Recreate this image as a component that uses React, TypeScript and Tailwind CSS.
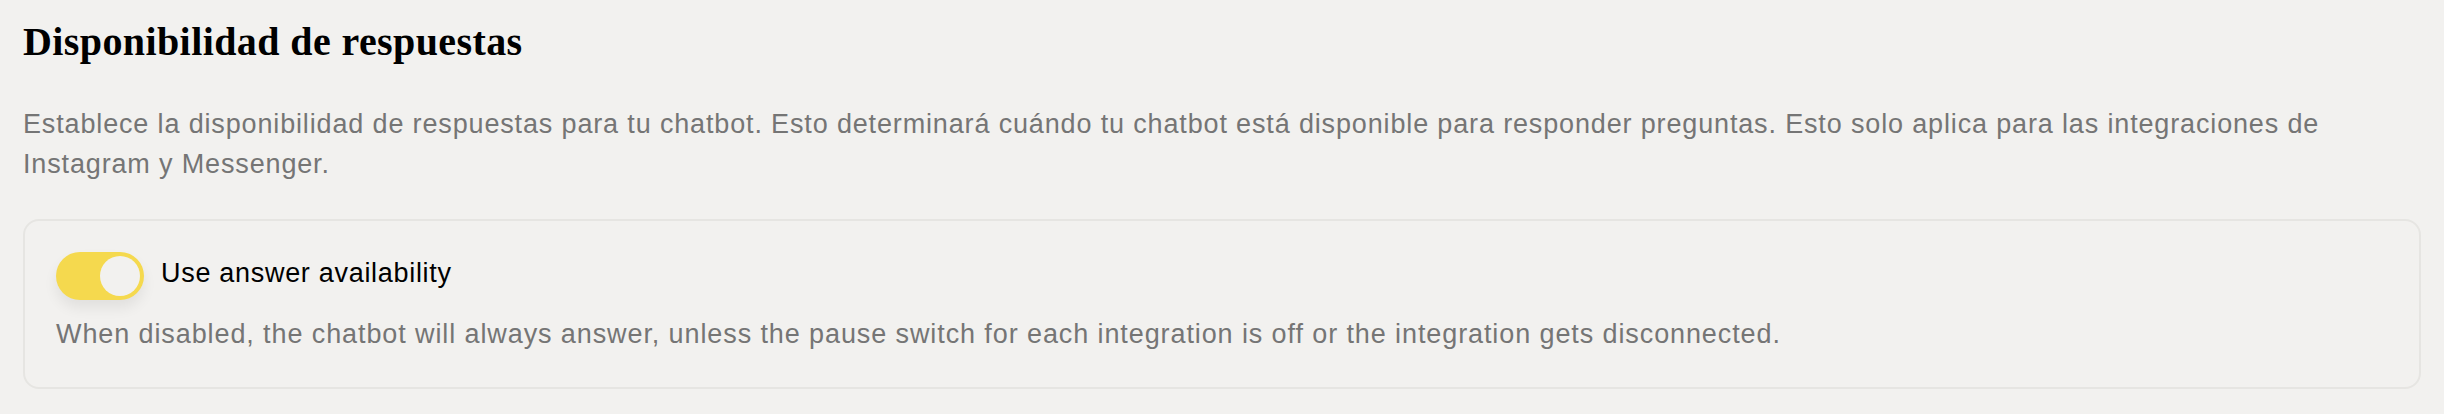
export default function App() {
  return (
    <div className="w-full h-[414px] bg-[#f2f1ef] px-[23px] pt-[22px]">
      <h2
        className="text-[40px] leading-[40px] font-bold tracking-[0.4px] text-black"
        style={{ fontFamily: '"Liberation Serif", serif' }}
      >
        Disponibilidad de respuestas
      </h2>
      <p
        className="mt-[42px] text-[27px] leading-[40px] tracking-[0.85px] text-[#757575]"
        style={{ fontFamily: '"Liberation Sans", Arial, sans-serif' }}
      >
        Establece la disponibilidad de respuestas para tu chatbot. Esto determinará cuándo tu chatbot está disponible para responder preguntas. Esto solo aplica para las integraciones de Instagram y Messenger.
      </p>
      <div
        className="mt-[35px] rounded-[16px] border-2 border-[#e6e5e2] px-[31px] pt-[31px] pb-[33px]"
        style={{ fontFamily: '"Liberation Sans", Arial, sans-serif' }}
      >
        <div className="flex items-center gap-[17px]">
          <button
            type="button"
            className="relative flex h-[48px] w-[88px] shrink-0 items-center justify-end rounded-full bg-[#f5d94e] pr-[4px] shadow-[0_8px_14px_rgba(0,0,0,0.07)]"
          >
            <span className="block h-[40px] w-[40px] rounded-full bg-[#f2f1ef]" />
          </button>
          <span className="mb-[6px] text-[27px] leading-[40px] tracking-[0.7px] text-black">
            Use answer availability
          </span>
        </div>
        <p className="mt-[14px] text-[27px] leading-[40px] tracking-[0.9px] text-[#757575]">
          When disabled, the chatbot will always answer, unless the pause switch for each integration is off or the integration gets disconnected.
        </p>
      </div>
    </div>
  );
}
